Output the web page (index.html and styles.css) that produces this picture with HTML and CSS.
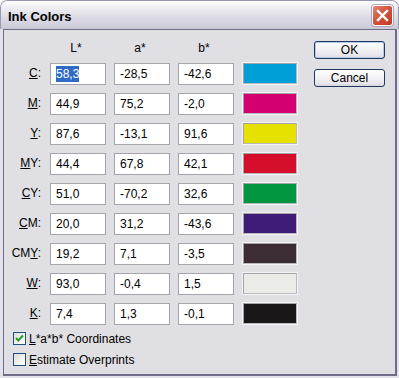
FILE: index.html
```html
<!DOCTYPE html>
<html lang="en">
    <head>
        <meta charset="utf-8">
        <title>Ink Colors</title>
        <link rel="stylesheet" href="styles.css">
    </head>
    <body>
        <div class="window">
            <div class="titlebar">
                <span class="title">Ink Colors</span>
                <button type="button" class="close" aria-label="Close">
                    <svg width="13" height="13" viewBox="0 0 13 13">
                        <path d="M2 2 L11 11 M11 2 L2 11" stroke="#fff" stroke-width="2.4" stroke-linecap="square"/>
                    </svg>
                </button>
            </div>

            <div class="client">
                <div class="main">
                    <div class="grid">
                        <span></span>
                        <span class="head">L*</span>
                        <span class="head">a*</span>
                        <span class="head">b*</span>
                        <span></span>

                        <span class="key"><u>C</u>:</span>
                        <div class="field"><span class="sel">58,3</span></div>
                        <div class="field">-28,5</div>
                        <div class="field">-42,6</div>
                        <div class="swatch cyan"></div>

                        <span class="key"><u>M</u>:</span>
                        <div class="field">44,9</div>
                        <div class="field">75,2</div>
                        <div class="field">-2,0</div>
                        <div class="swatch magenta"></div>

                        <span class="key"><u>Y</u>:</span>
                        <div class="field">87,6</div>
                        <div class="field">-13,1</div>
                        <div class="field">91,6</div>
                        <div class="swatch yellow"></div>

                        <span class="key"><u>M</u>Y:</span>
                        <div class="field">44,4</div>
                        <div class="field">67,8</div>
                        <div class="field">42,1</div>
                        <div class="swatch red"></div>

                        <span class="key"><u>C</u>Y:</span>
                        <div class="field">51,0</div>
                        <div class="field">-70,2</div>
                        <div class="field">32,6</div>
                        <div class="swatch green"></div>

                        <span class="key"><u>C</u>M:</span>
                        <div class="field">20,0</div>
                        <div class="field">31,2</div>
                        <div class="field">-43,6</div>
                        <div class="swatch purple"></div>

                        <span class="key">CM<u>Y</u>:</span>
                        <div class="field">19,2</div>
                        <div class="field">7,1</div>
                        <div class="field">-3,5</div>
                        <div class="swatch dark"></div>

                        <span class="key"><u>W</u>:</span>
                        <div class="field">93,0</div>
                        <div class="field">-0,4</div>
                        <div class="field">1,5</div>
                        <div class="swatch white"></div>

                        <span class="key"><u>K</u>:</span>
                        <div class="field">7,4</div>
                        <div class="field">1,3</div>
                        <div class="field">-0,1</div>
                        <div class="swatch black"></div>
                    </div>

                    <div class="checks">
                        <div class="check">
                            <span class="box">
                                <svg width="11" height="11" viewBox="0 0 11 11">
                                    <path d="M2 5 L4.3 7.5 L9 2.5" fill="none" stroke="#21a121" stroke-width="2"/>
                                </svg>
                            </span>
                            <span><u>L</u>*a*b* Coordinates</span>
                        </div>
                        <div class="check">
                            <span class="box"></span>
                            <span><u>E</u>stimate Overprints</span>
                        </div>
                    </div>
                </div>

                <div class="buttons">
                    <button type="button" class="btn default">OK</button>
                    <button type="button" class="btn">Cancel</button>
                </div>
            </div>
        </div>
    </body>
</html>
```

FILE: styles.css
```css
body {
    margin: 0;
    padding: 0;
    font-family: "Liberation Sans", Arial, sans-serif;
    font-size: 12px;
    color: #000;
    background: #fff;
}

.window {
    width: 399px;
    height: 378px;
    box-sizing: border-box;
    padding: 0 2px 2px 3px;
    border-radius: 7px 7px 0 0;
    background: #e3e2ea;
    display: flex;
    flex-direction: column;
    overflow: hidden;
}

.titlebar {
    height: 29px;
    margin: 0 -2px 0 -3px;
    padding: 0 5px 0 7px;
    display: flex;
    align-items: center;
    justify-content: space-between;
    border-radius: 7px 7px 0 0;
    border: 1px solid #9a98b0;
    border-bottom: none;
    box-sizing: border-box;
    background: linear-gradient(#ffffff, #f0f0f4 20%, #dedde6 55%, #cfcedb 90%, #c7c6d3);
}

.title {
    font-weight: bold;
    font-size: 13px;
    padding-top: 2px;
}

.close {
    width: 21px;
    height: 21px;
    margin-top: 1px;
    padding: 0;
    border: 1px solid #fff;
    border-radius: 3px;
    background: linear-gradient(135deg, #e9856f, #d2533c 45%, #c13a26);
    display: flex;
    align-items: center;
    justify-content: center;
    box-shadow: 0 0 0 1px #b0a8b8;
}

.client {
    flex: 1;
    display: flex;
    border: 1px solid #6f6d88;
    border-width: 1px 2px 2px 1px;
    background: #e0dfe3;
}

.main {
    padding-top: 8px;
}

.grid {
    display: grid;
    grid-template-columns: 38px 56px 56px 56px 56px;
    grid-template-rows: 17px repeat(9, 22px);
    column-gap: 8px;
    row-gap: 8px;
}

.head {
    text-align: center;
    padding-right: 4px;
    line-height: 17px;
    padding-top: 2px;
}

.key {
    text-align: right;
    padding-right: 1px;
    align-self: center;
    padding-bottom: 2px;
}

.field {
    box-sizing: border-box;
    background: #fff;
    border: 1px solid #a5a5ab;
    padding: 0 0 0 5px;
    line-height: 20px;
}

.sel {
    background: #316ac5;
    color: #fff;
    padding: 1px 0;
}

.swatch {
    box-sizing: border-box;
    border: 2px solid #a2a2a6;
    border-right-color: #b9b9bc;
    border-bottom-color: #b9b9bc;
    outline: 1px solid #f4f4f6;
    outline-offset: -1px;
    margin-top: -1px;
}

.cyan { background: #009fd8; }
.magenta { background: #d4006f; }
.yellow { background: #e6e100; }
.red { background: #d40e2b; }
.green { background: #00963f; }
.purple { background: #3d1d78; }
.dark { background: #3b2c36; }
.white { background: #ebebe8; }
.black { background: #1a1718; }

.checks {
    margin-top: 7px;
    padding-left: 9px;
    display: flex;
    flex-direction: column;
    gap: 8px;
}

.check {
    display: flex;
    align-items: center;
    gap: 3px;
    height: 13px;
}

.box {
    width: 13px;
    height: 13px;
    box-sizing: border-box;
    border: 1px solid #1c5180;
    background: linear-gradient(135deg, #dcdcd7, #f6f6f4 70%, #fff);
    display: flex;
    align-items: center;
    justify-content: center;
}

.buttons {
    margin-left: 16px;
    padding-top: 11px;
    display: flex;
    flex-direction: column;
    gap: 10px;
}

.btn {
    width: 71px;
    height: 18px;
    padding: 0;
    font-family: inherit;
    font-size: 12px;
    color: #000;
    border: 1px solid #1e3a5e;
    border-radius: 3px;
    background: linear-gradient(#ffffff, #f4f4f6 40%, #e6e5ec 85%, #d6d5df);
}

.btn.default {
    box-shadow: inset 0 0 0 1px #b8c8e8;
}
```
